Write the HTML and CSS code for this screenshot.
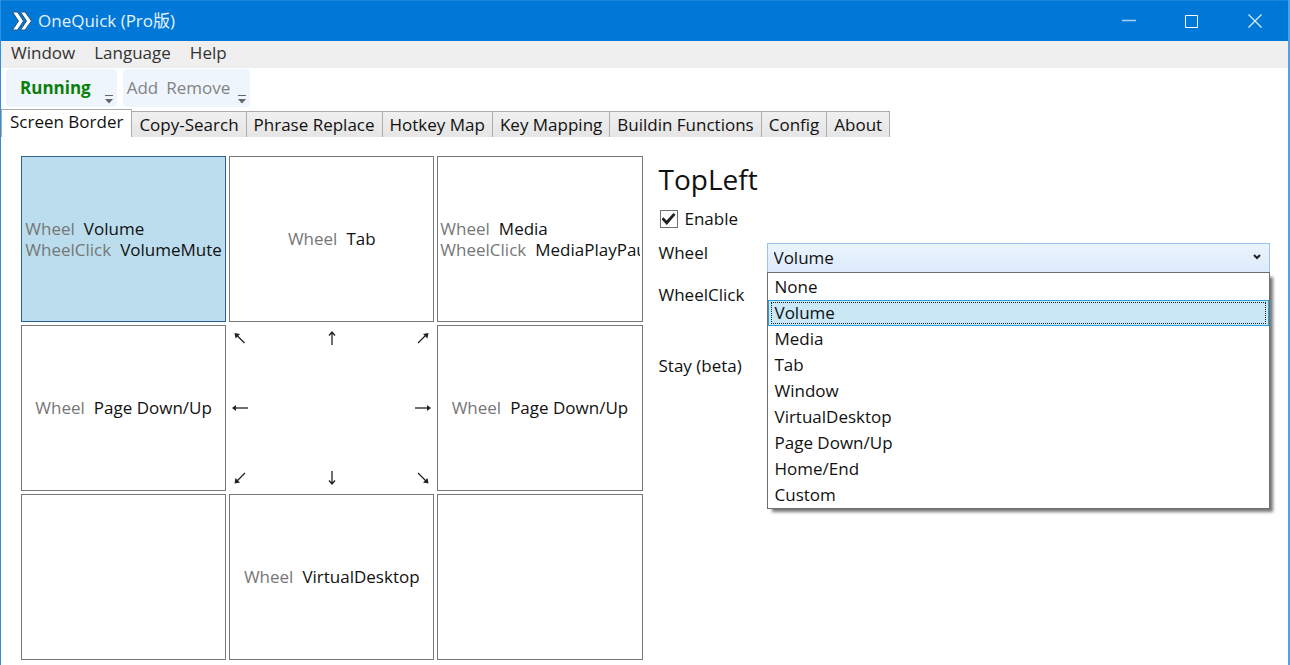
FILE: index.html
```html
<!DOCTYPE html>
<html lang="en">
<head>
<meta charset="utf-8">
<title>OneQuick (Pro版)</title>
<link rel="stylesheet" href="styles.css">
</head>
<body>
<div class="window">
  <header class="titlebar">
    <svg class="logo" width="20" height="20" viewBox="0 0 20 20"><path d="M.5 1H5.500L11.500 10L5.500 19H.5L6.500 10ZM8.500 1H13L19.500 10L13 19H8.500L14.500 10Z" fill="#fff" stroke="#28567f" stroke-width="1"/></svg>
    <h1 class="title">OneQuick (Pro版)</h1>
    <div class="controls">
      <button class="control" aria-label="Minimize"><svg width="14" height="14" viewBox="0 0 14 14"><path d="M0 6.500H14" stroke="#a9d0f3" stroke-width="1.500"/></svg></button>
      <button class="control" aria-label="Maximize"><svg width="14" height="14" viewBox="0 0 14 14"><path d="M.5 1.500H12.500V13.500H.5Z" fill="none" stroke="#fff" stroke-width="1"/></svg></button>
      <button class="control" aria-label="Close"><svg width="14" height="14" viewBox="0 0 14 14"><path d="M.5 .5L13.500 13.500M13.500 .5L.5 13.500" stroke="#dcecfa" stroke-width="1.300"/></svg></button>
    </div>
  </header>

  <nav class="menubar">
    <button class="menu-item">Window</button>
    <button class="menu-item">Language</button>
    <button class="menu-item">Help</button>
  </nav>

  <div class="toolbars">
    <div class="toolbar">
      <button class="tool running">Running</button>
      <button class="overflow" aria-label="More status tools"><svg width="8" height="9" viewBox="0 0 8 9"><path d="M0 0H8V1H0ZM0 4H8L4 8.500Z" fill="#666"/></svg></button>
    </div>
    <div class="toolbar">
      <button class="tool">Add</button>
      <button class="tool">Remove</button>
      <button class="overflow" aria-label="More edit tools"><svg width="8" height="9" viewBox="0 0 8 9"><path d="M0 0H8V1H0ZM0 4H8L4 8.500Z" fill="#666"/></svg></button>
    </div>
  </div>

  <div class="tabs" role="tablist">
    <button class="tab active" role="tab" aria-selected="true">Screen Border</button>
    <button class="tab" role="tab">Copy-Search</button>
    <button class="tab" role="tab">Phrase Replace</button>
    <button class="tab" role="tab">Hotkey Map</button>
    <button class="tab" role="tab">Key Mapping</button>
    <button class="tab" role="tab">Buildin Functions</button>
    <button class="tab" role="tab">Config</button>
    <button class="tab" role="tab">About</button>
  </div>

  <main class="content">
    <section class="borders">
      <button class="cell selected"><span class="lines"><span class="line"><span class="key">Wheel</span><span>Volume</span></span><span class="line"><span class="key">WheelClick</span><span>VolumeMute</span></span></span></button>
      <button class="cell"><span class="line"><span class="key">Wheel</span><span>Tab</span></span></button>
      <button class="cell overflowing"><span class="lines"><span class="line"><span class="key">Wheel</span><span>Media</span></span><span class="line"><span class="key">WheelClick</span><span>MediaPlayPause</span></span></span></button>
      <button class="cell"><span class="line"><span class="key">Wheel</span><span>Page Down/Up</span></span></button>
      <div class="compass">
        <svg class="arrow" viewBox="0 0 16 16"><path d="M12.500 13L4 4.500"/><path class="tip" d="M2.500 3L8 4L3.500 8.500Z"/></svg>
        <svg class="arrow" viewBox="0 0 16 16"><path d="M8 15V3M5 5.500L8 2L11 5.500"/></svg>
        <svg class="arrow" viewBox="0 0 16 16"><path d="M3 13L12 4"/><path class="tip" d="M13.500 3L8 4L12.500 8.500Z"/></svg>
        <svg class="arrow" viewBox="0 0 16 16"><path d="M16 8H2"/><path class="tip" d="M0 8L4 5V11Z"/></svg>
        <span></span>
        <svg class="arrow" viewBox="0 0 16 16"><path d="M0 8H14"/><path class="tip" d="M16 8L12 5V11Z"/></svg>
        <svg class="arrow" viewBox="0 0 16 16"><path d="M13 3L4 12"/><path class="tip" d="M2.500 13.500L8 12.500L3.500 8Z"/></svg>
        <svg class="arrow" viewBox="0 0 16 16"><path d="M8 1V13M5 10.500L8 14L11 10.500"/></svg>
        <svg class="arrow" viewBox="0 0 16 16"><path d="M3 3L12 12"/><path class="tip" d="M13.500 13.500L8 12.500L12.500 8Z"/></svg>
      </div>
      <button class="cell"><span class="line"><span class="key">Wheel</span><span>Page Down/Up</span></span></button>
      <button class="cell" aria-label="Bottom left"></button>
      <button class="cell"><span class="line"><span class="key">Wheel</span><span>VirtualDesktop</span></span></button>
      <button class="cell" aria-label="Bottom right"></button>
    </section>

    <section class="settings">
      <h2 class="heading">TopLeft</h2>
      <label class="check"><input class="checkbox" type="checkbox" checked>Enable</label>
      <div class="row">
        <label class="row-label" for="wheel">Wheel</label>
        <div class="combo">
          <select class="select open" id="wheel"><option>Volume</option></select>
          <svg class="chevron" width="8" height="6" viewBox="0 0 8 6"><path d="M1 1L4 4L7 1" fill="none" stroke="#222" stroke-width="2"/></svg>
          <ul class="popup" role="listbox" aria-label="Wheel">
            <li class="option" role="option">None</li>
            <li class="option current" role="option" aria-selected="true">Volume</li>
            <li class="option" role="option">Media</li>
            <li class="option" role="option">Tab</li>
            <li class="option" role="option">Window</li>
            <li class="option" role="option">VirtualDesktop</li>
            <li class="option" role="option">Page Down/Up</li>
            <li class="option" role="option">Home/End</li>
            <li class="option" role="option">Custom</li>
          </ul>
        </div>
      </div>
      <div class="row tall">
        <label class="row-label" for="wheel-click">WheelClick</label>
        <div class="combo"><select class="select" id="wheel-click"></select></div>
      </div>
      <div class="row">
        <label class="row-label" for="stay">Stay (beta)</label>
        <div class="combo"><select class="select" id="stay"></select></div>
      </div>
    </section>
  </main>
</div>
</body>
</html>
```
FILE: styles.css
```css
* { box-sizing: border-box; }
body {
  margin: 0;
  background: #fff;
  color: #111;
  font: 17px/20px "Open Sans", "Noto Sans CJK SC", sans-serif;
}
button, select { font: inherit; color: inherit; padding: 0; border: 0; background: none; }
.window {
  min-height: 100vh;
  border-left: 1px solid #2b8fe2;
  border-right: 2px solid #4ca1e8;
  display: flex;
  flex-direction: column;
}
.titlebar {
  display: flex;
  align-items: center;
  height: 41px;
  padding-left: 11px;
  padding-right: 2px;
  gap: 6px;
  background: #0078d7;
  border-top: 1px solid #1a84da;
  color: #e6f2fc;
}
.title { margin: 0; font-size: 17px; font-weight: 400; }
.controls { display: flex; margin-left: auto; }
.control { width: 63px; height: 40px; display: grid; place-items: center; }
.menubar { display: flex; height: 27px; padding: 0 10px; gap: 19px; background: #efefef; color: #333; }
.menu-item { padding-bottom: 3px; }
.toolbars { display: flex; gap: 6px; padding: 1px 5px; }
.toolbar {
  display: flex;
  align-items: center;
  gap: 8px;
  height: 38px;
  padding-left: 4px;
  padding-right: 4px;
  border-radius: 4px;
  background: #eef5fd;
  color: #838383;
}
.running { padding-left: 10px; padding-right: 6px; color: #0a800a; font-weight: 700; }
.overflow { align-self: flex-end; padding-bottom: 3px; line-height: 0; }
.tabs { display: flex; align-items: flex-end; padding-top: 1px; }
.tab {
  height: 26px;
  padding: 0 7px;
  border: 1px solid #acacac;
  border-left-width: 0;
  border-bottom: 0;
  background: linear-gradient(#f0f0f0, #e5e5e5);
}
.tab.active { height: 28px; padding: 0 8px 3px; border-left-width: 1px; background: #fff; }
.content { display: grid; grid-template-columns: 1fr 1fr; padding: 19px 18px 5px 20px; flex: 1; }
.borders {
  display: grid;
  grid-template-columns: repeat(3, minmax(0, 1fr));
  grid-template-rows: repeat(3, 1fr);
  gap: 3px;
  padding-right: 3px;
}
.cell {
  display: flex;
  align-items: center;
  justify-content: center;
  min-height: 166px;
  border: 1px solid #777;
  padding: 0 2px;
  overflow: hidden;
  white-space: nowrap;
}
.cell.selected { background: #bbdded; border-color: #2c628b; }
.cell.overflowing { justify-content: flex-start; }
.overflowing .lines { min-width: 0; overflow: hidden; }
.lines { display: flex; flex-direction: column; gap: 1px; }
.line { display: flex; gap: 9px; }
.key { color: #777; }
.compass { display: grid; grid-template-columns: 1fr 1fr 1fr; align-content: space-between; padding: 5px 3px; }
.arrow { width: 16px; height: 16px; fill: none; stroke: #222; stroke-width: 1.3; }
.tip { fill: #222; stroke: none; }
.arrow:nth-child(3n+2) { justify-self: center; }
.arrow:nth-child(3n) { justify-self: end; }
.settings { padding-top: 1px; padding-left: 13px; }
.heading { margin: 0; font-size: 28px; line-height: 44px; font-weight: 400; }
.check { display: flex; align-items: center; gap: 7px; margin: 8px 0 14px; height: 20px; padding-left: 1px; }
.checkbox {
  appearance: none;
  width: 18px;
  height: 18px;
  margin: 0;
  border: 1px solid #707070;
  display: grid;
  place-items: center;
}
.checkbox:checked::before {
  content: "";
  width: 14px;
  height: 12px;
  background: #212121;
  clip-path: polygon(0 52%, 14% 36%, 36% 62%, 86% 0, 100% 14%, 38% 100%);
}
.row { display: grid; grid-template-columns: 108px 1fr; height: 42px; }
.row.tall { height: 71px; }
.row-label { height: 20px; }
.combo { position: relative; height: 30px; }
.select { appearance: none; width: 100%; height: 30px; padding: 0 6px; border: 1px solid #acacac; }
.select.open { border-color: #9ac4ee; background: linear-gradient(#ebf4fd, #dceafa); }
.chevron { position: absolute; right: 9px; top: 11px; }
.popup {
  position: absolute;
  z-index: 1;
  top: 29px;
  left: 0;
  right: 0;
  margin: 0;
  padding: 1px 0 0;
  list-style: none;
  background: #fff;
  border: 1px solid #6e6e6e;
  box-shadow: 4px 4px 3px -1px #777;
}
.option { height: 26px; padding: 2px 6px; border: 1px solid transparent; }
.option.current { position: relative; background: #cbe8f6; border-color: #26a0da; }
.option.current::after { content: ""; position: absolute; inset: 1px 2px; border: 1px dotted #222; }
```
